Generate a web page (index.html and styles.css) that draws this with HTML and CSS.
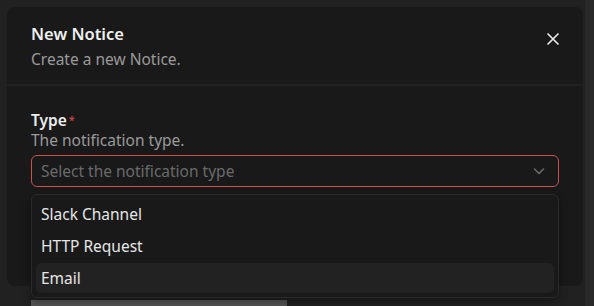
FILE: index.html
```html
<!DOCTYPE html>
<html>
<head>
<meta charset="utf-8">
<link rel="stylesheet" href="styles.css">
</head>
<body>
<div class="app">
  <main class="stage">
    <section class="dialog">
      <header class="dialog-header">
        <div class="titles">
          <h2 class="title">New Notice</h2>
          <p class="subtitle">Create a new Notice.</p>
        </div>
        <button class="close" aria-label="Close">
          <svg width="14" height="14" viewBox="0 0 14 14"><path d="M2 2L12 12M12 2L2 12" stroke="#e8e8e8" stroke-width="1.7" stroke-linecap="round"/></svg>
        </button>
      </header>
      <div class="dialog-body">
        <div class="field">
          <label class="label">Type<span class="req">*</span></label>
          <p class="desc">The notification type.</p>
          <div class="select">
            <span class="placeholder">Select the notification type</span>
            <svg class="chev" width="14" height="14" viewBox="0 0 14 14"><path d="M2.5 5L7 9.5L11.5 5" fill="none" stroke="#6a6a6a" stroke-width="1.6" stroke-linecap="round" stroke-linejoin="round"/></svg>
          </div>
          <ul class="menu">
            <li class="item">Slack Channel</li>
            <li class="item">HTTP Request</li>
            <li class="item active">Email</li>
          </ul>
        </div>
      </div>
    </section>
    <div class="bg-bar"></div>
  </main>
  <div class="scroll-strip"></div>
</div>
</body>
</html>
```

FILE: styles.css
```css
* { box-sizing: border-box; }
html, body { margin: 0; padding: 0; }
body {
  background: #212121;
  font-family: "Noto Sans", "Lato", sans-serif;
  color: #ececec;
  width: 594px;
  height: 306px;
  overflow: hidden;
}
.app {
  display: flex;
  height: 306px;
}
.stage {
  flex: 1;
  padding: 7px 0 0 7px;
}
.scroll-strip {
  width: 9px;
  background: #292929;
}
.dialog {
  width: 576px;
  height: 279px;
  background: #191919;
  border-radius: 8px;
  display: flex;
  flex-direction: column;
}
.dialog-header {
  display: flex;
  justify-content: space-between;
  align-items: flex-start;
  padding: 16px 24px 0 24px;
  height: 79px;
  border-bottom: 2px solid #222222;
}
.title {
  margin: 0;
  font-size: 16.5px;
  font-weight: 600;
  line-height: 22px;
  color: #f0f0f0;
}
.subtitle {
  margin: 4px 0 0;
  font-size: 15.5px;
  line-height: 20px;
  color: #9a9a9a;
}
.close {
  background: none;
  border: 0;
  padding: 0;
  margin: 9px -1px 0 0;
  width: 14px;
  height: 14px;
  display: flex;
}
.dialog-body {
  padding: 24px 24px 0 24px;
}
.field {
  position: relative;
}
.label {
  display: block;
  font-size: 15.5px;
  font-weight: 600;
  line-height: 20px;
  color: #ececec;
}
.req {
  color: #e5484d;
  font-size: 11px;
  vertical-align: top;
  margin-left: 2px;
  font-weight: 400;
}
.desc {
  margin: 0;
  font-size: 15.5px;
  line-height: 20px;
  color: #9a9a9a;
}
.select {
  margin-top: 5px;
  height: 32px;
  border: 1px solid #c7514f;
  border-radius: 6px;
  display: flex;
  align-items: center;
  justify-content: space-between;
  padding: 0 12px 0 9px;
}
.placeholder {
  font-size: 15.5px;
  color: #6a6a6a;
}
.chev { display: block; }
.menu {
  position: absolute;
  left: 0;
  right: 0;
  top: 84px;
  margin: 0;
  padding: 4px;
  list-style: none;
  background: #191919;
  border: 1px solid #2a2a2a;
  border-radius: 6px;
  display: flex;
  flex-direction: column;
  gap: 2px;
  box-shadow: 0 4px 10px rgba(0,0,0,0.35);
  z-index: 2;
}
.item {
  height: 30px;
  display: flex;
  align-items: center;
  padding: 0 5px;
  font-size: 15.5px;
  color: #e6e6e6;
  border-radius: 5px;
}
.item.active {
  background: #222222;
}
.bg-bar {
  margin: 14px 0 0 24px;
  width: 256px;
  height: 6px;
  background: #555555;
}
```
